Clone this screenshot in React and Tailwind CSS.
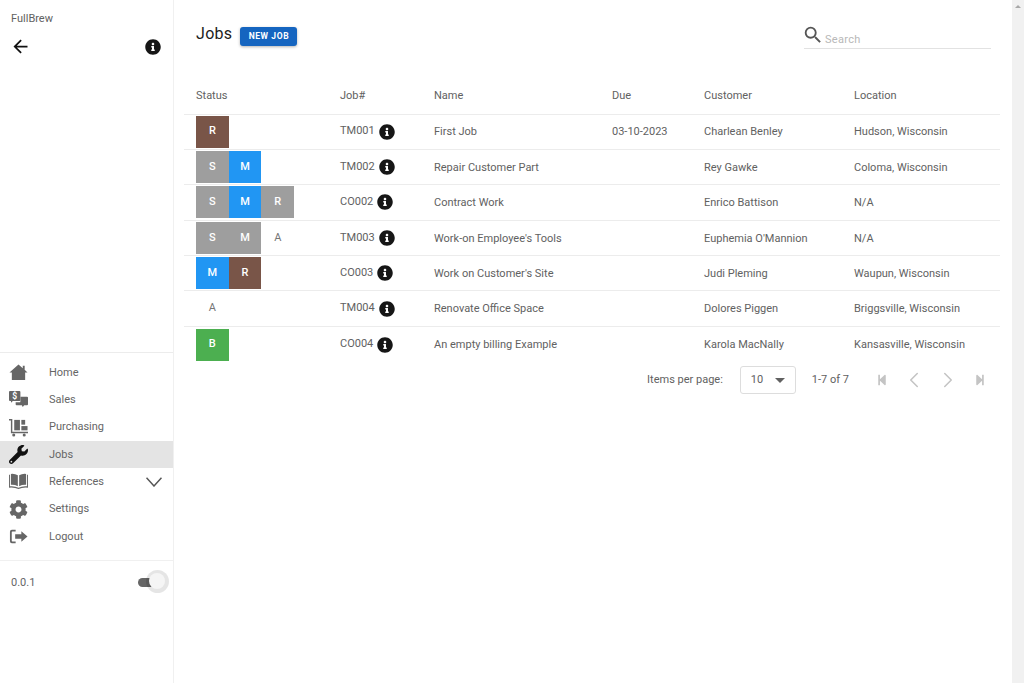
import React from 'react';
import { FaCog, FaWrench, FaInfoCircle, FaStepBackward, FaStepForward } from 'react-icons/fa';
import { MdArrowBack, MdSearch, MdArrowDropDown } from 'react-icons/md';
import { ChevronLeft, ChevronRight } from 'lucide-react';

const HomeIcon = ({ className }) => (
    <svg viewBox="0 0 20 20" className={className} fill="currentColor">
        <path d="M10 1.5 L14.5 5.4 V3 H16.5 V7.2 L19.5 10 H17 V18 H3 V10 H0.5 Z" />
    </svg>
);

const SalesIcon = ({ className }) => (
    <svg viewBox="0 0 20 20" className={className} fill="currentColor">
        <path d="M12 7 H19 Q20 7 20 8 V15 Q20 16 19 16 H16 L14.5 18 L13.5 16 H8 Q7 16 7 15 V13 H11 Q12 13 12 12 Z" />
        <path d="M1 1 H11 Q12 1 12 2 V10.5 Q12 11.5 11 11.5 H4 L2.2 13.5 L2 11.5 H1 Q0 11.5 0 10.5 V2 Q0 1 1 1 Z" />
        <text x="6" y="9.6" textAnchor="middle" fontSize="9" fontWeight="700" fill="#ffffff" fontFamily="Roboto, sans-serif">$</text>
    </svg>
);

const PurchasingIcon = ({ className }) => (
    <svg viewBox="0 0 20 20" className={className} fill="currentColor">
        <path d="M0 1 H3.5 V14.5 H20 V16 H2 V2.5 H0 Z" />
        <rect x="5.5" y="2" width="6" height="11" />
        <rect x="13" y="2" width="4" height="5" />
        <rect x="13" y="8.5" width="6.5" height="4.5" />
        <circle cx="5" cy="18" r="1.6" />
        <circle cx="16" cy="18" r="1.6" />
    </svg>
);

const BookIcon = ({ className }) => (
    <svg viewBox="0 0 20 20" className={className} fill="currentColor">
        <path d="M2 2 Q6 1.5 9.3 3.5 V15 Q6 13.2 2 13.5 Z" />
        <path d="M18 2 Q14 1.5 10.7 3.5 V15 Q14 13.2 18 13.5 Z" />
        <path d="M0 3 H1 V15 Q6 14.5 10 16.5 Q14 14.5 19 15 V3 H20 V16.5 Q14 16 10 18 Q6 16 0 16.5 Z" />
    </svg>
);

const LogoutIcon = ({ className }) => (
    <svg viewBox="0 0 20 20" className={className} fill="currentColor">
        <path d="M7 3 H3 Q1 3 1 5 V15 Q1 17 3 17 H7 V15.2 H3.6 Q2.9 15.2 2.9 14.5 V5.5 Q2.9 4.8 3.6 4.8 H7 Z" />
        <path d="M13 4.5 L19.5 10 L13 15.5 V12.3 H6.5 V7.7 H13 Z" />
    </svg>
);

const navItems = [
    { label: 'Home', icon: HomeIcon },
    { label: 'Sales', icon: SalesIcon },
    { label: 'Purchasing', icon: PurchasingIcon },
    { label: 'Jobs', icon: FaWrench, active: true },
    { label: 'References', icon: BookIcon, expand: true },
    { label: 'Settings', icon: FaCog },
    { label: 'Logout', icon: LogoutIcon },
];

const statusClasses = {
    gray: 'bg-[#9e9e9e] text-white',
    blue: 'bg-[#2196f3] text-white',
    brown: 'bg-[#795548] text-white',
    green: 'bg-[#4caf50] text-white',
    none: 'bg-white text-[#757575] font-normal',
};

const jobs = [
    { id: 'TM001', name: 'First Job', due: '03-10-2023', customer: 'Charlean Benley', location: 'Hudson, Wisconsin', status: [['R', 'brown']] },
    { id: 'TM002', name: 'Repair Customer Part', due: '', customer: 'Rey Gawke', location: 'Coloma, Wisconsin', status: [['S', 'gray'], ['M', 'blue']] },
    { id: 'CO002', name: 'Contract Work', due: '', customer: 'Enrico Battison', location: 'N/A', status: [['S', 'gray'], ['M', 'blue'], ['R', 'gray']] },
    { id: 'TM003', name: 'Work-on Employee\'s Tools', due: '', customer: 'Euphemia O\'Mannion', location: 'N/A', status: [['S', 'gray'], ['M', 'gray'], ['A', 'none']] },
    { id: 'CO003', name: 'Work on Customer\'s Site', due: '', customer: 'Judi Pleming', location: 'Waupun, Wisconsin', status: [['M', 'blue'], ['R', 'brown']] },
    { id: 'TM004', name: 'Renovate Office Space', due: '', customer: 'Dolores Piggen', location: 'Briggsville, Wisconsin', status: [['A', 'none']] },
    { id: 'CO004', name: 'An empty billing Example', due: '', customer: 'Karola MacNally', location: 'Kansasville, Wisconsin', status: [['B', 'green']] },
];

const gridCols = 'grid grid-cols-[144px_94px_178px_92px_150px_146px]';

const Sidebar = () => (
    <aside className="w-[174px] shrink-0 h-full flex flex-col border-r border-[#f0f0f0] text-[11px] text-[#666666]">
        <div className="flex-1 pt-[12px]">
            <div className="px-[11px] leading-[14px] text-[#616161]">FullBrew</div>
            <div className="flex items-center justify-between pl-[10px] pr-[12px] mt-[10px]">
                <MdArrowBack className="text-[21px] text-[#111111]" />
                <FaInfoCircle className="text-[16px] text-[#161616]" />
            </div>
        </div>

        <nav className="border-t border-[#ececec] pt-[6px] pb-[10px]">
            {navItems.map(({ label, icon: Icon, active, expand }) => (
                <div
                    key={label}
                    className={`h-[27.3px] flex items-center ${active ? 'bg-[#e4e4e4]' : ''}`}
                >
                    <span className="w-[49px] pl-[9px] shrink-0">
                        <Icon className={`w-[19px] h-[19px] ${active ? 'text-[#111111]' : 'text-[#666666]'}`} />
                    </span>
                    <span className="flex-1 pt-[1px]">{label}</span>
                    {expand && (
                        <svg viewBox="0 0 16 10" className="w-[16px] h-[10px] mr-[11px] text-[#555555]" fill="none" stroke="currentColor" strokeWidth="1.5">
                            <polyline points="0.5,0.8 8,9 15.5,0.8" />
                        </svg>
                    )}
                </div>
            ))}
        </nav>

        <div className="border-t border-[#f0f0f0] h-[44px] mb-[79px] pl-[11px] pr-[4px] flex items-center justify-between">
            <span className="pt-[1px]">0.0.1</span>
            <div className="relative w-[31px] h-[24px] mb-[2px]">
                <span className="absolute left-0 top-[8px] w-[18px] h-[9px] rounded-full bg-[#666666]" />
                <span className="absolute left-[8px] top-0 w-[23px] h-[23px] rounded-full bg-[#000000]/10" />
                <span className="absolute left-[11px] top-[3px] w-[16px] h-[16px] rounded-full bg-[#f5f5f5]" />
            </div>
        </div>
    </aside>
);

const Header = () => (
    <div className="flex items-start justify-between pl-[22px] pr-[21px] h-[78px]">
        <div className="flex items-center pt-[22px]">
            <h1 className="text-[16px] leading-[20px] font-normal text-[#1c1c1c] tracking-[0.3px]">Jobs</h1>
            <button className="ml-[8px] mt-[5px] w-[57px] h-[19px] rounded-[3px] bg-[#1565c0] text-white text-[8.5px] font-bold tracking-[0.6px] shadow-[0_1px_3px_rgba(0,0,0,0.3)]">
                NEW JOB
            </button>
        </div>
        <div className="mt-[24px] w-[187px] h-[25px] border-b border-[#e2e2e2] flex items-center">
            <MdSearch className="text-[22px] text-[#555555] ml-[-2px] mb-[3px]" />
            <span className="ml-[1px] mt-[9px] text-[11px] text-[#b8b8b8] tracking-[0.3px]">Search</span>
        </div>
    </div>
);

const StatusCell = ({ status }) => (
    <div className="flex">
        {status.map(([letter, color], i) => (
            <span
                key={i}
                className={`w-[32.7px] h-[32px] flex items-center justify-center text-[11px] font-medium ${statusClasses[color]}`}
            >
                {letter}
            </span>
        ))}
    </div>
);

const JobsTable = () => (
    <div className="ml-[10px] mr-[12px] text-[11px] text-[#616161]">
        <div className={`${gridCols} h-[36.5px] items-center pl-[12px] pt-[1px] border-b border-[#ececec]`}>
            <span>Status</span>
            <span>Job#</span>
            <span>Name</span>
            <span>Due</span>
            <span>Customer</span>
            <span>Location</span>
        </div>
        {jobs.map((job, i) => (
            <div
                key={job.id}
                className={`${gridCols} h-[35.4px] items-center pl-[12px] ${i < jobs.length - 1 ? 'border-b border-[#ececec]' : ''}`}
            >
                <StatusCell status={job.status} />
                <div className="flex items-center">
                    <span>{job.id}</span>
                    <FaInfoCircle className="text-[16px] text-[#161616] ml-[4px]" />
                </div>
                <span className="pt-[2px]">{job.name}</span>
                <span className="pt-[2px]">{job.due}</span>
                <span className="pt-[2px]">{job.customer}</span>
                <span className="pt-[2px]">{job.location}</span>
            </div>
        ))}
    </div>
);

const Pagination = () => (
    <div className="flex items-center justify-end h-[36px] mr-[26px] text-[11px] text-[#616161]">
        <span>Items per page:</span>
        <div className="ml-[17px] w-[56px] h-[28px] rounded-[3px] border border-[#dddddd] flex items-center justify-between pl-[10px] pr-[3px]">
            <span>10</span>
            <MdArrowDropDown className="text-[24px] text-[#616161]" />
        </div>
        <span className="ml-[16px]">1-7 of 7</span>
        <div className="ml-[27px] flex items-center text-[#c4c4c4]">
            <FaStepBackward className="text-[12px]" />
            <ChevronLeft size={26} strokeWidth={1.4} className="ml-[13px]" />
            <ChevronRight size={26} strokeWidth={1.4} className="ml-[8px]" />
            <FaStepForward className="text-[12px] ml-[13px]" />
        </div>
    </div>
);

const App = () => (
    <div className="h-screen overflow-hidden flex bg-white font-['Roboto',sans-serif]">
        <Sidebar />
        <main className="flex-1 min-w-0">
            <Header />
            <JobsTable />
            <Pagination />
        </main>
        <div className="w-[12px] shrink-0 bg-[#f1f1f1] flex justify-center pt-[5px]">
            <span className="w-0 h-0 border-x-[3px] border-x-transparent border-b-[3px] border-b-[#a8a8a8]" />
        </div>
    </div>
);

export default App;
